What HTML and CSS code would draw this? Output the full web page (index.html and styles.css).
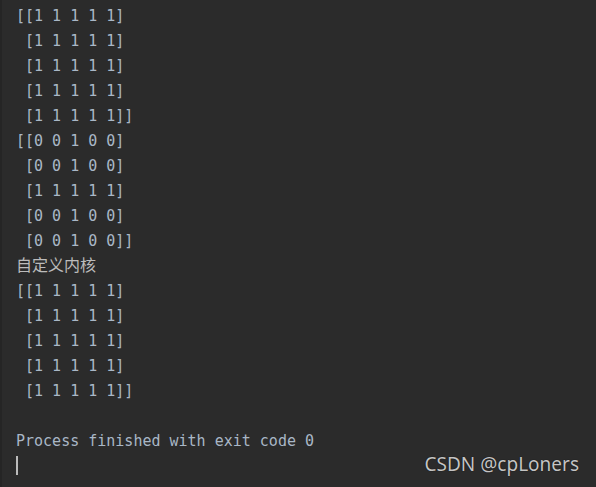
FILE: index.html
```html
<!DOCTYPE html>
<html>
<head>
<meta charset="utf-8">
<link rel="stylesheet" href="styles.css">
</head>
<body>
<div class="console">
<pre class="out">[[1 1 1 1 1]
 [1 1 1 1 1]
 [1 1 1 1 1]
 [1 1 1 1 1]
 [1 1 1 1 1]]
[[0 0 1 0 0]
 [0 0 1 0 0]
 [1 1 1 1 1]
 [0 0 1 0 0]
 [0 0 1 0 0]]
<span class="cn">自定义内核</span>
[[1 1 1 1 1]
 [1 1 1 1 1]
 [1 1 1 1 1]
 [1 1 1 1 1]
 [1 1 1 1 1]]

<span class="proc">Process finished with exit code 0</span>
<span class="cursor"></span></pre>
<div class="watermark">CSDN @cpLoners</div>
</div>
</body>
</html>
```
FILE: styles.css
```css
html, body {
  margin: 0;
  padding: 0;
  background: #2b2b2b;
}
.console {
  position: relative;
  width: 596px;
  height: 487px;
  background: #2b2b2b;
  border-left: 2px solid #252525;
  box-sizing: border-box;
  overflow: hidden;
}
.out {
  margin: 0;
  padding: 4px 0 0 14px;
  font-family: "DejaVu Sans Mono", "Liberation Mono", monospace;
  font-size: 15px;
  line-height: 25px;
  color: #a9b7c6;
}
.cn {
  font-family: "Noto Sans CJK SC", sans-serif;
  font-size: 16px;
  line-height: 1;
  color: #bbbbbb;
}
.proc {
  color: #a9b7c6;
}
.cursor {
  display: inline-block;
  width: 2px;
  height: 19px;
  background: #bbbbbb;
  vertical-align: -4px;
}
.watermark {
  position: absolute;
  right: 17px;
  top: 451px;
  font-family: "Noto Sans", sans-serif;
  font-size: 19px;
  line-height: 27px;
  color: #c4c4c4;
  text-shadow: 0 0 1px #000;
}
```
